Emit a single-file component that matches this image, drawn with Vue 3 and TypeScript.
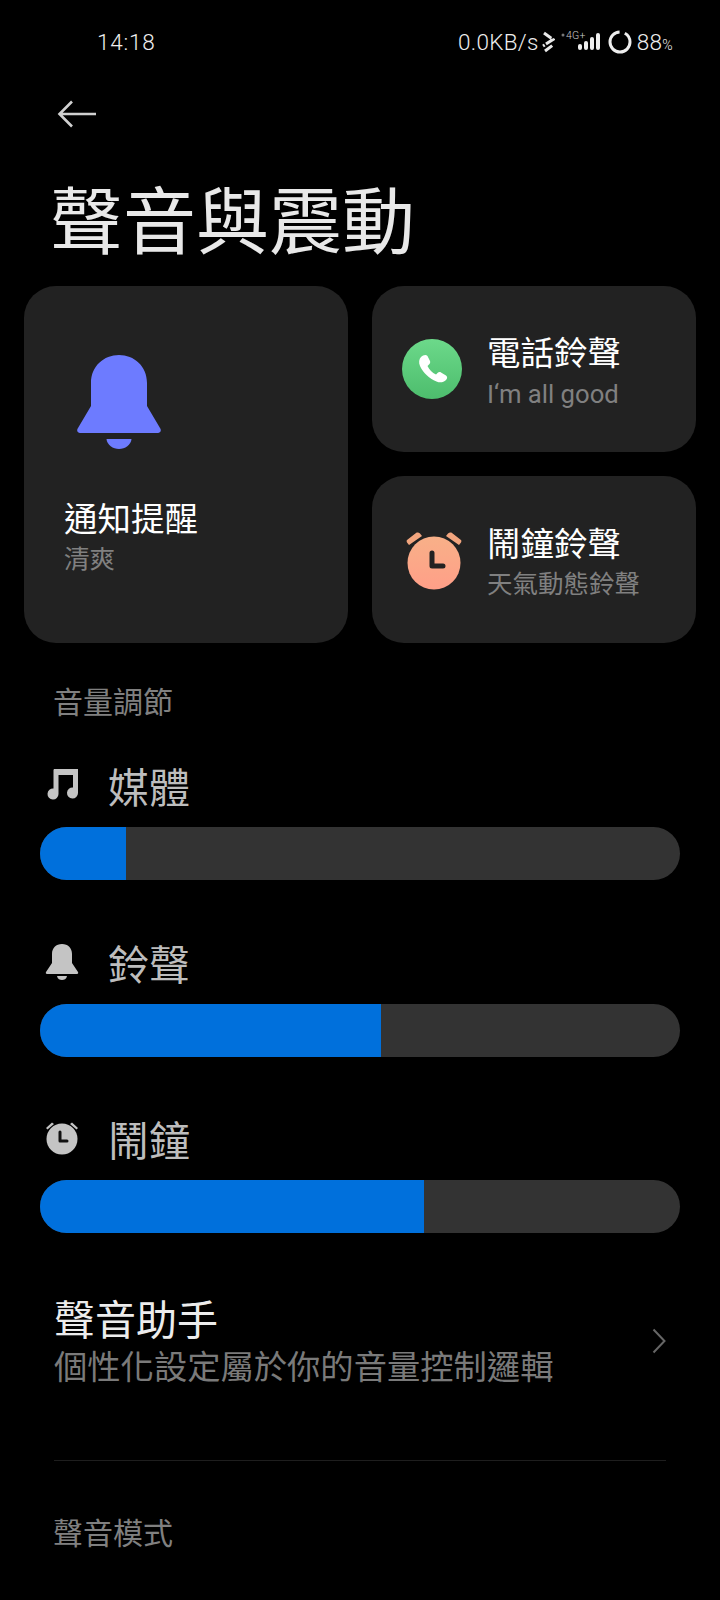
<template>
  <div class="page">
    <div class="status">
      <span class="time">14:18</span>
      <div class="status-right">
        <span class="speed">0.0KB/s</span>
        <svg class="bt" width="14" height="22" viewBox="0 0 14 22">
          <path d="M3 2l9 6.500-10 6.500M4 20l8-6" fill="none" stroke="#e8e8e8" stroke-width="3" stroke-dasharray="9 1.500" />
        </svg>
        <svg class="signal" width="40" height="22" viewBox="0 0 40 22">
          <circle cx="2" cy="4" r="1.500" fill="#777" />
          <text x="5" y="8" class="net">4G+</text>
          <rect x="17" y="13" width="4" height="6" rx="2" fill="#eee" />
          <rect x="23" y="10" width="4" height="9" rx="2" fill="#eee" />
          <rect x="29" y="6" width="4" height="13" rx="2" fill="#eee" />
          <rect x="35" y="2" width="4" height="17" rx="2" fill="#eee" />
        </svg>
        <svg class="ring" width="24" height="24" viewBox="0 0 24 24">
          <circle cx="12" cy="12" r="10" fill="none" stroke="#eee" stroke-width="3" stroke-dasharray="57 6" stroke-dashoffset="-5" transform="rotate(-90 12 12)" />
        </svg>
        <span class="batt">88<small>%</small></span>
      </div>
    </div>

    <div class="back">
      <svg width="40" height="28" viewBox="0 0 40 28">
        <path d="M39 14H3M15 1.500L2.500 14 15 26.500" fill="none" stroke="#d0d0d0" stroke-width="2.600" />
      </svg>
    </div>

    <h1 class="title">聲音與震動</h1>

    <div class="cards">
      <div class="card big">
        <svg class="big-bell" width="86" height="94" viewBox="0 0 86 94">
          <path d="M43 0C58 0 71 11 71 28V51L84 73C86 76 84 78 81 78H5C2 78 0 76 2 73L15 51V28C15 11 28 0 43 0Z" fill="#6d7bff" />
          <path d="M30.500 84H55.500C55 90 49 94 43 94S31 90 30.500 84Z" fill="#6d7bff" />
        </svg>
        <div class="card-title">通知提醒</div>
        <div class="card-sub">清爽</div>
      </div>
      <div class="card small">
        <svg class="card-icon" width="60" height="60" viewBox="0 0 60 60">
          <defs>
            <linearGradient id="green" x1="0" y1="0" x2="0" y2="1">
              <stop offset="0" stop-color="#6cd98a" />
              <stop offset="1" stop-color="#4dbd6d" />
            </linearGradient>
          </defs>
          <circle cx="30" cy="30" r="30" fill="url(#green)" />
          <path d="M19 18C21 16 24 15 25.500 17L28 22C28.500 23.500 28 24.500 27 25.500L25.500 27C27.500 31 30 33.500 34 35.500L35.500 34C36.500 33 38 32.800 39 33.500L44 36.500C45.500 37.500 45.500 39.500 44 41C41.500 43.500 38 44 34.500 42.500C27 39.500 21 33.500 18 27C16.500 23.500 17 20 19 18Z" fill="#fff" />
        </svg>
        <div>
          <div class="card-title">電話鈴聲</div>
          <div class="card-sub latin">I‘m all good</div>
        </div>
      </div>
      <div class="card small">
        <svg class="card-icon" width="60" height="60" viewBox="-2 0 60 60">
          <defs>
            <linearGradient id="peach" x1="0" y1="0" x2="0" y2="1">
              <stop offset="0" stop-color="#f8b088" />
              <stop offset="1" stop-color="#ff9f88" />
            </linearGradient>
          </defs>
          <path d="M3 10L12 3c1-.7 3-.6 4 .5l2 2.500L5 15 3 12.500c-.5-1-.5-2 0-2.500zM57 10L48 3c-1-.7-3-.6-4 .5l-2 2.500 13 9 2-2.500c.5-1 .5-2 0-2.500z" fill="#f2a57e" />
          <circle cx="30" cy="33" r="26.500" fill="url(#peach)" />
          <path d="M28 23V36H39" fill="none" stroke="#222" stroke-width="5" stroke-linecap="round" stroke-linejoin="round" />
        </svg>
        <div>
          <div class="card-title">鬧鐘鈴聲</div>
          <div class="card-sub">天氣動態鈴聲</div>
        </div>
      </div>
    </div>

    <div class="section-label vol-label">音量調節</div>

    <div v-for="row in volumes" :key="row.name" class="vol">
      <div class="vol-head">
        <svg v-if="row.icon === 'music'" width="36" height="36" viewBox="0 0 36 36">
          <path d="M10 2H34V26A5.500 5.500 0 1 1 29 20.500V8H14.500V27A5.500 5.500 0 1 1 9.500 21.500V3Z" fill="#c4c4c4" />
        </svg>
        <svg v-else-if="row.icon === 'bell'" width="36" height="36" viewBox="0 0 36 36">
          <path d="M18 0C24 0 28 4 28 10V19L34 28C34.500 29 34 30 33 30H3C2 30 1.500 29 2 28L8 19V10C8 4 12 0 18 0Z" fill="#c4c4c4" />
          <path d="M13 32H23C22.500 35 20 36 18 36S13.500 35 13 32Z" fill="#c4c4c4" />
        </svg>
        <svg v-else width="36" height="36" viewBox="0 0 36 36">
          <path d="M2 8L8 2.500 10 4 3.500 9.500zM34 8L28 2.500 26 4l6.500 5.500z" fill="#c4c4c4" />
          <circle cx="18" cy="19" r="15.500" fill="#c4c4c4" />
          <path d="M16 12V21H23" fill="none" stroke="#111" stroke-width="3" stroke-linecap="round" stroke-linejoin="round" />
        </svg>
        <span class="vol-name">{{ row.name }}</span>
      </div>
      <div class="track">
        <div class="fill" :style="{ width: row.percent + '%' }"></div>
      </div>
    </div>

    <div class="assist">
      <div>
        <div class="assist-title">聲音助手</div>
        <div class="assist-sub">個性化設定屬於你的音量控制邏輯</div>
      </div>
      <svg class="chevron" width="14" height="26" viewBox="0 0 14 26">
        <path d="M1.500 1.500L12.500 13 1.500 24.500" fill="none" stroke="#666" stroke-width="2" />
      </svg>
    </div>

    <div class="divider"></div>

    <div class="section-label">聲音模式</div>
  </div>
</template>

<script setup lang="ts">
const volumes = [
  { name: '媒體', icon: 'music', percent: 13.4 },
  { name: '鈴聲', icon: 'bell', percent: 53.3 },
  { name: '鬧鐘', icon: 'clock', percent: 60 }
];
</script>

<style>
html,
body {
  background: #000;
}
</style>

<style scoped>
.page {
  width: 720px;
  height: 1600px;
  overflow: hidden;
  background: #000;
  color: #fff;
  font-family: "Noto Sans CJK TC", "Noto Sans", sans-serif;
}

.status {
  height: 28px;
  margin-top: 28px;
  padding: 0 47px 0 97px;
  display: flex;
  justify-content: space-between;
  align-items: center;
  font-family: Roboto, sans-serif;
  font-weight: 300;
  color: #eee;
  font-size: 22.500px;
  letter-spacing: 0.3px;
}

.time {
  letter-spacing: 0.8px;
}

.status-right {
  display: flex;
  align-items: center;
}

.bt {
  margin-left: 2px;
}

.signal {
  margin-left: 6px;
  overflow: visible;
}

.net {
  font-size: 10.500px;
  fill: #ccc;
}

.ring {
  margin: 0 5px 0 7px;
}

.batt small {
  font-size: 14px;
}

.back {
  margin: 44px 0 0 57px;
  height: 28px;
}

.title {
  margin: 40px 0 0 50px;
  font-size: 73px;
  font-weight: 400;
  line-height: 96px;
  color: #e8e8e8;
}

.cards {
  margin: 22px 24px 0;
  display: grid;
  grid-template-columns: 324px 324px;
  grid-template-rows: 166px 167px;
  gap: 24px;
}

.card {
  background: #222;
  border-radius: 32px;
}

.big {
  grid-row: span 2;
  padding: 69px 0 0 40px;
}

.big-bell {
  display: block;
  margin: 0 0 46px 12px;
}

.small {
  display: flex;
  align-items: center;
  padding-left: 30px;
}

.card-icon {
  margin-right: 25px;
}

.card-title {
  font-size: 33.500px;
  line-height: 44px;
  color: #fff;
}

.card-sub {
  font-size: 25.500px;
  line-height: 36px;
  color: #808080;
}

.latin {
  font-family: Roboto, sans-serif;
  font-size: 25.700px;
  padding-top: 3px;
  margin-bottom: -3px;
}

.section-label {
  margin-left: 53px;
  font-size: 30px;
  line-height: 40px;
  color: #808080;
}

.vol-label {
  margin-top: 37px;
  margin-bottom: 38px;
}

.vol {
  margin: 0 40px;
}

.vol-head {
  height: 54px;
  display: flex;
  align-items: center;
  padding-left: 4px;
  gap: 28px;
}

.vol-name {
  font-size: 41px;
  color: #bdbdbd;
}

.track {
  height: 53px;
  margin-top: 15px;
  margin-bottom: 54.700px;
  border-radius: 27px;
  background: #333;
  overflow: hidden;
}

.fill {
  height: 100%;
  background: #0070dc;
}

.assist {
  margin: 0 54px;
  padding-top: 3px;
  display: flex;
  justify-content: space-between;
  align-items: center;
}

.chevron {
  margin-top: 4px;
}

.assist-title {
  font-size: 41px;
  line-height: 52px;
  color: #ececec;
}

.assist-sub {
  font-size: 33.300px;
  line-height: 44px;
  color: #7a7a7a;
}

.divider {
  height: 1px;
  margin: 73px 54px 50px;
  background: #1e1e1e;
}
</style>
